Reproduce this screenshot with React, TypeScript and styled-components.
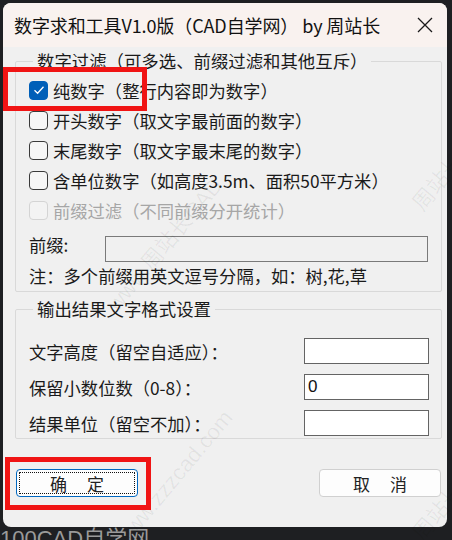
import React from 'react';
import styled, { createGlobalStyle } from 'styled-components';

const GlobalStyle = createGlobalStyle`
  html, body {
    margin: 0;
    padding: 0;
    background: #1e1f22;
  }
  * {
    box-sizing: border-box;
  }
`;

const CJK = `"Noto Sans CJK SC", "Noto Sans", sans-serif`;

const Page = styled.div`
  position: relative;
  width: 452px;
  height: 540px;
  padding: 3px 0 0 3px;
  overflow: hidden;
  font-family: ${CJK};
`;

const Window = styled.div`
  width: 444px;
  height: 524px;
  border-radius: 8px;
  overflow: hidden;
  background: #f0f0f0;
  display: flex;
  flex-direction: column;
`;

const TitleBar = styled.div`
  height: 44px;
  flex-shrink: 0;
  background: #f9f2ef;
  display: flex;
  align-items: center;
  justify-content: space-between;
  padding: 0 14px 0 11px;
`;

const Title = styled.span`
  font-size: 18px;
  color: #111;
  letter-spacing: -0.1px;
`;

const Body = styled.div`
  padding: 0 5px 0 12px;
  display: flex;
  flex-direction: column;
`;

const Group = styled.fieldset<{ $gap?: number }>`
  margin: ${(p) => p.$gap ?? 2}px 0 0 0;
  padding: 2px 12px 4px 13px;
  border: 1px solid #d9d9d9;
  border-radius: 2px;
  min-width: 0;
`;

const Legend = styled.legend`
  margin-left: 4px;
  padding: 0 4px 0 4px;
  font-size: 17.4px;
  line-height: 24px;
  color: #1a1a1a;
`;

const CheckRow = styled.label<{ $disabled?: boolean }>`
  height: 30px;
  display: flex;
  align-items: center;
  gap: 5px;
  font-size: 17.3px;
  color: ${(p) => (p.$disabled ? '#a6a6a6' : '#1a1a1a')};
`;

const Box = styled.span<{ $checked?: boolean; $disabled?: boolean }>`
  width: 19px;
  height: 19px;
  flex-shrink: 0;
  border-radius: 4px;
  display: flex;
  align-items: center;
  justify-content: center;
  background: ${(p) => (p.$checked ? '#005fb8' : p.$disabled ? '#f3f3f3' : '#f6f6f6')};
  border: 1px solid
    ${(p) => (p.$checked ? '#005fb8' : p.$disabled ? '#d4d4d4' : '#3a3a3a')};
`;

const PrefixRow = styled.div`
  height: 40px;
  display: flex;
  align-items: flex-start;
  gap: 0;
`;

const PrefixLabel = styled.span`
  width: 76px;
  font-size: 17.3px;
  line-height: 26px;
  margin-top: 7px;
  color: #1a1a1a;
`;

const PrefixInput = styled.div`
  margin-top: 11px;
  width: 323px;
  height: 26px;
  border: 1px solid #7a7a7a;
  background: #f0f0f0;
`;

const Note = styled.div`
  height: 22px;
  line-height: 22px;
  font-size: 17.3px;
  color: #1a1a1a;
`;

const FieldList = styled.div`
  display: flex;
  flex-direction: column;
  gap: 10px;
  padding: 15px 0 0 0;
  margin-bottom: -2px;
`;

const FieldRow = styled.div`
  display: flex;
  align-items: center;
  justify-content: space-between;
  height: 26px;
`;

const FieldLabel = styled.span`
  font-size: 17.3px;
  color: #1a1a1a;
`;

const TextBox = styled.div`
  width: 125px;
  height: 26px;
  border: 1px solid #646464;
  background: #fff;
  padding: 0 3px;
  font-family: "Liberation Sans", Arial, sans-serif;
  font-size: 17px;
  line-height: 24px;
  color: #111;
`;

const ButtonRow = styled.div`
  display: flex;
  justify-content: space-between;
  align-items: center;
  margin-top: 30px;
  padding: 0 1px;
`;

const Button = styled.button<{ $focused?: boolean }>`
  width: 122px;
  height: 28px;
  border-radius: 4px;
  background: #fdfdfd;
  border: 1px solid ${(p) => (p.$focused ? '#0067c0' : '#d0d0d0')};
  outline: ${(p) => (p.$focused ? '1px dotted #111' : 'none')};
  outline-offset: -4px;
  display: flex;
  align-items: center;
  justify-content: center;
  gap: 20px;
  font-family: ${CJK};
  font-size: 17px;
  color: #222;
  padding: 0;
`;

const Footer = styled.div`
  height: 13px;
  overflow: hidden;
  font-family: "Liberation Sans", ${CJK};
  font-size: 22px;
  line-height: 24px;
  color: #9a9a9a;
  padding-left: 0;
  margin-left: -3px;
`;

const Highlight = styled.div<{ $x: number; $y: number; $w: number; $h: number }>`
  position: absolute;
  left: ${(p) => p.$x}px;
  top: ${(p) => p.$y}px;
  width: ${(p) => p.$w}px;
  height: ${(p) => p.$h}px;
  border: 5px solid #f01414;
  pointer-events: none;
`;

const Watermark = styled.span<{ $x: number; $y: number }>`
  position: absolute;
  left: ${(p) => p.$x}px;
  top: ${(p) => p.$y}px;
  transform: rotate(-50deg);
  transform-origin: left center;
  font-family: "Liberation Sans", ${CJK};
  font-size: 22px;
  color: rgba(0, 0, 0, 0.06);
  white-space: nowrap;
  pointer-events: none;
`;

function CheckMark() {
  return (
    <svg width='12' height='10' viewBox='0 0 12 10'>
      <path d='M1.5 5.2 L4.6 8.2 L10.5 1.8' fill='none' stroke='#fff' strokeWidth='1.3' />
    </svg>
  );
}

function CloseIcon() {
  return (
    <svg width='16' height='16' viewBox='0 0 16 16'>
      <path d='M1 1 L15 15 M15 1 L1 15' stroke='#1a1a1a' strokeWidth='1.3' />
    </svg>
  );
}

const filters = [
  { text: '纯数字（整行内容即为数字）', checked: true },
  { text: '开头数字（取文字最前面的数字）' },
  { text: '末尾数字（取文字最末尾的数字）' },
  { text: '含单位数字（如高度3.5m、面积50平方米）' },
  { text: '前缀过滤（不同前缀分开统计）', disabled: true },
];

const fields = [
  { label: '文字高度（留空自适应）：', value: '' },
  { label: '保留小数位数（0-8）：', value: '0' },
  { label: '结果单位（留空不加）：', value: '' },
];

export default function App() {
  return (
    <Page>
      <GlobalStyle />
      <Window>
        <TitleBar>
          <Title>数字求和工具V1.0版（CAD自学网） by 周站长</Title>
          <CloseIcon />
        </TitleBar>
        <Body>
          <Group>
            <Legend>数字过滤（可多选、前缀过滤和其他互斥）</Legend>
            {filters.map((f) => (
              <CheckRow key={f.text} $disabled={f.disabled}>
                <Box $checked={f.checked} $disabled={f.disabled}>
                  {f.checked && <CheckMark />}
                </Box>
                {f.text}
              </CheckRow>
            ))}
            <PrefixRow>
              <PrefixLabel>前缀:</PrefixLabel>
              <PrefixInput />
            </PrefixRow>
            <Note>注：多个前缀用英文逗号分隔，如：树,花,草</Note>
          </Group>
          <Group $gap={5}>
            <Legend>输出结果文字格式设置</Legend>
            <FieldList>
              {fields.map((f) => (
                <FieldRow key={f.label}>
                  <FieldLabel>{f.label}</FieldLabel>
                  <TextBox>{f.value}</TextBox>
                </FieldRow>
              ))}
            </FieldList>
          </Group>
          <ButtonRow>
            <Button $focused>
              <span>确</span>
              <span>定</span>
            </Button>
            <Button>
              <span>取</span>
              <span>消</span>
            </Button>
          </ButtonRow>
        </Body>
      </Window>
      <Footer>100CAD自学网</Footer>
      <Watermark $x={110} $y={290}>www.周站长CAD</Watermark>
      <Watermark $x={120} $y={530}>www.zzzcad.com</Watermark>
      <Watermark $x={415} $y={190}>周站长</Watermark>
      <Watermark $x={415} $y={520}>周站长</Watermark>
      <Highlight $x={3} $y={67} $w={144} $h={44} />
      <Highlight $x={5} $y={457} $w={146} $h={53} />
    </Page>
  );
}
